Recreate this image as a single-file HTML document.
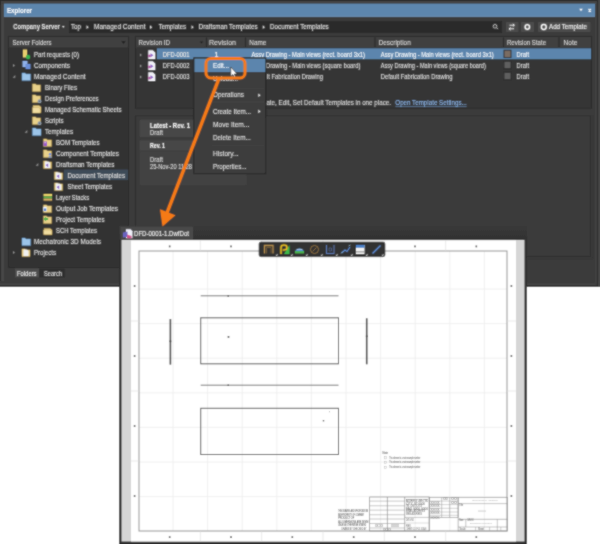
<!DOCTYPE html>
<html><head><meta charset="utf-8">
<style>
*{margin:0;padding:0}
html,body{width:600px;height:544px;overflow:hidden;background:#fff}
svg{display:block}
#w{will-change:transform}
text{font-family:"Liberation Sans",sans-serif}
</style></head><body><div id="w">
<svg width="600" height="544" viewBox="0 0 600 544">
<defs><filter id="bl" x="0" y="0" width="600" height="544" filterUnits="userSpaceOnUse"><feConvolveMatrix order="3" kernelMatrix="1 2 1 2 12 2 1 2 1" edgeMode="duplicate" preserveAlpha="true"/></filter></defs>
<g filter="url(#bl)">
<rect x="0" y="0" width="600" height="544" fill="#ffffff"/>
<rect x="0" y="0" width="600" height="287" fill="#3e3e3e"/>
<rect x="0.5" y="0.5" width="598" height="285.5" fill="none" stroke="#2c2c2c" stroke-width="1"/>
<rect x="1.2" y="1" width="2.8" height="284" fill="#464646"/>
<rect x="1" y="1" width="597" height="3" fill="#424242"/>
<rect x="4" y="3.6" width="591.5" height="13.2" fill="#5d86ad"/>
<line x1="4" y1="16.4" x2="595.5" y2="16.4" stroke="#7291b5" stroke-width="0.7"/>
<text x="7" y="12.55" font-size="7.5" fill="#f4f8fc" stroke="#f4f8fc" stroke-width="0.18" font-weight="bold" textLength="25" lengthAdjust="spacingAndGlyphs">Explorer</text>
<path d="M579.2 8.7 L582.8 8.7 L581 11.2 Z" fill="#f2f6fa"/>
<path d="M588.5 9 L591 11.5 M591 9 L588.5 11.5" stroke="#eef4fa" stroke-width="1.1"/>
<rect x="4" y="17" width="592" height="264" fill="#3a3a3a"/>
<rect x="0" y="281" width="600" height="6" fill="#3b3b3b"/>
<rect x="0" y="283.6" width="600" height="1.3" fill="#484848"/>
<rect x="0" y="285" width="600" height="1.8" fill="#363636"/>
<rect x="595" y="4" width="2.5" height="281" fill="#3f3f3f"/>
<line x1="597.6" y1="0" x2="597.6" y2="287" stroke="#2b2b2b" stroke-width="1"/>
<rect x="598.1" y="0" width="1.9" height="287" fill="#464646"/>
<text x="13.2" y="29.30" font-size="7" fill="#dcdcdc" stroke="#dcdcdc" stroke-width="0.18" font-weight="bold" textLength="46.6" lengthAdjust="spacingAndGlyphs">Company Server</text>
<path d="M62 26 L64.6 26 L63.3 28 Z" fill="#cfcfcf"/>
<rect x="69" y="21" width="433" height="12" fill="#2c2c2c"/>
<text x="71" y="29.30" font-size="7" fill="#d8d8d8" stroke="#d8d8d8" stroke-width="0.18" textLength="10" lengthAdjust="spacingAndGlyphs">Top</text>
<text x="94" y="29.30" font-size="7" fill="#d8d8d8" stroke="#d8d8d8" stroke-width="0.18" textLength="51.5" lengthAdjust="spacingAndGlyphs">Managed Content</text>
<text x="158.75" y="29.30" font-size="7" fill="#d8d8d8" stroke="#d8d8d8" stroke-width="0.18" textLength="27.25" lengthAdjust="spacingAndGlyphs">Templates</text>
<text x="198.75" y="29.30" font-size="7" fill="#d8d8d8" stroke="#d8d8d8" stroke-width="0.18" textLength="58.75" lengthAdjust="spacingAndGlyphs">Draftsman Templates</text>
<text x="270" y="29.30" font-size="7" fill="#d8d8d8" stroke="#d8d8d8" stroke-width="0.18" textLength="58.75" lengthAdjust="spacingAndGlyphs">Document Templates</text>
<path d="M86.5 25.3 L88.7 27.2 L86.5 29.1 Z" fill="#cfcfcf"/>
<path d="M150 25.3 L152.2 27.2 L150 29.1 Z" fill="#cfcfcf"/>
<path d="M191.5 25.3 L193.7 27.2 L191.5 29.1 Z" fill="#cfcfcf"/>
<path d="M262.75 25.3 L264.95 27.2 L262.75 29.1 Z" fill="#cfcfcf"/>
<circle cx="495" cy="26.3" r="1.8" fill="none" stroke="#bbb" stroke-width="0.9"/><path d="M496.3 27.6 L497.8 29.1" stroke="#bbb" stroke-width="1"/>
<rect x="506" y="22" width="12.5" height="10" fill="#4b4b4b" rx="1"/>
<path d="M509.5 25.2 L514 25.2 M512.8 23.9 L514.5 25.2 L512.8 26.5 M514 28.8 L509.5 28.8 M510.7 27.5 L509 28.8 L510.7 30.1" stroke="#e8e8e8" stroke-width="1" fill="none"/>
<rect x="521" y="22" width="13" height="10" fill="#4b4b4b" rx="1"/>
<circle cx="527.3" cy="27" r="2.2" fill="none" stroke="#f2f2f2" stroke-width="1.5"/>
<rect x="538" y="22" width="52.5" height="10" fill="#4b4b4b" rx="1"/>
<circle cx="543.8" cy="27" r="2.4" fill="none" stroke="#f2f2f2" stroke-width="1.5"/>
<text x="549" y="29.30" font-size="7" fill="#e8e8e8" stroke="#e8e8e8" stroke-width="0.18" textLength="38" lengthAdjust="spacingAndGlyphs">Add Template</text>
<rect x="8" y="36" width="121" height="232" fill="#333333"/>
<rect x="8.5" y="36.5" width="120" height="231" fill="none" stroke="#2b2b2b" stroke-width="1"/>
<rect x="9" y="37" width="119" height="10.5" fill="#3f3f3f"/>
<text x="12.5" y="44.90" font-size="7" fill="#cfcfcf" stroke="#cfcfcf" stroke-width="0.18" textLength="39" lengthAdjust="spacingAndGlyphs">Server Folders</text>
<path d="M121.5 41.3 L125.5 41.3 L123.5 43.8 Z" fill="#1a1a1a"/>
<rect x="64" y="169.5" width="64" height="10.5" fill="#3e4b58"/>
<text x="34" y="56.50" font-size="7" fill="#d6d6d6" stroke="#d6d6d6" stroke-width="0.18" textLength="45" lengthAdjust="spacingAndGlyphs">Part requests (0)</text>
<text x="34" y="67.50" font-size="7" fill="#d6d6d6" stroke="#d6d6d6" stroke-width="0.18" textLength="36" lengthAdjust="spacingAndGlyphs">Components</text>
<text x="34" y="78.50" font-size="7" fill="#d6d6d6" stroke="#d6d6d6" stroke-width="0.18" textLength="51.6" lengthAdjust="spacingAndGlyphs">Managed Content</text>
<text x="45" y="89.50" font-size="7" fill="#d6d6d6" stroke="#d6d6d6" stroke-width="0.18" textLength="32" lengthAdjust="spacingAndGlyphs">Binary Files</text>
<text x="45" y="100.50" font-size="7" fill="#d6d6d6" stroke="#d6d6d6" stroke-width="0.18" textLength="53.6" lengthAdjust="spacingAndGlyphs">Design Preferences</text>
<text x="45" y="111.50" font-size="7" fill="#d6d6d6" stroke="#d6d6d6" stroke-width="0.18" textLength="76.6" lengthAdjust="spacingAndGlyphs">Managed Schematic Sheets</text>
<text x="45" y="122.50" font-size="7" fill="#d6d6d6" stroke="#d6d6d6" stroke-width="0.18" textLength="18.6" lengthAdjust="spacingAndGlyphs">Scripts</text>
<text x="45" y="133.50" font-size="7" fill="#d6d6d6" stroke="#d6d6d6" stroke-width="0.18" textLength="28" lengthAdjust="spacingAndGlyphs">Templates</text>
<text x="56" y="144.50" font-size="7" fill="#d6d6d6" stroke="#d6d6d6" stroke-width="0.18" textLength="43.6" lengthAdjust="spacingAndGlyphs">BOM Templates</text>
<text x="56" y="155.50" font-size="7" fill="#d6d6d6" stroke="#d6d6d6" stroke-width="0.18" textLength="63" lengthAdjust="spacingAndGlyphs">Component Templates</text>
<text x="56" y="166.50" font-size="7" fill="#d6d6d6" stroke="#d6d6d6" stroke-width="0.18" textLength="58.4" lengthAdjust="spacingAndGlyphs">Draftsman Templates</text>
<text x="67.4" y="177.50" font-size="7" fill="#d6d6d6" stroke="#d6d6d6" stroke-width="0.18" textLength="57.6" lengthAdjust="spacingAndGlyphs">Document Templates</text>
<text x="67.4" y="188.50" font-size="7" fill="#d6d6d6" stroke="#d6d6d6" stroke-width="0.18" textLength="44.6" lengthAdjust="spacingAndGlyphs">Sheet Templates</text>
<text x="56" y="199.50" font-size="7" fill="#d6d6d6" stroke="#d6d6d6" stroke-width="0.18" textLength="33" lengthAdjust="spacingAndGlyphs">Layer Stacks</text>
<text x="56" y="210.50" font-size="7" fill="#d6d6d6" stroke="#d6d6d6" stroke-width="0.18" textLength="62" lengthAdjust="spacingAndGlyphs">Output Job Templates</text>
<text x="56" y="221.50" font-size="7" fill="#d6d6d6" stroke="#d6d6d6" stroke-width="0.18" textLength="48.6" lengthAdjust="spacingAndGlyphs">Project Templates</text>
<text x="56" y="232.50" font-size="7" fill="#d6d6d6" stroke="#d6d6d6" stroke-width="0.18" textLength="41" lengthAdjust="spacingAndGlyphs">SCH Templates</text>
<text x="34" y="243.50" font-size="7" fill="#d6d6d6" stroke="#d6d6d6" stroke-width="0.18" textLength="67" lengthAdjust="spacingAndGlyphs">Mechatronic 3D Models</text>
<text x="34" y="254.50" font-size="7" fill="#d6d6d6" stroke="#d6d6d6" stroke-width="0.18" textLength="22" lengthAdjust="spacingAndGlyphs">Projects</text>
<path d="M13 63.900000000000006 L15 65.4 L13 66.9 Z" fill="#8a8a8a"/>
<path d="M13 250.9 L15 252.4 L13 253.9 Z" fill="#8a8a8a"/>
<path d="M15.3 75.10000000000001 L15.3 77.7 L12.7 77.7 Z" fill="#8a8a8a"/>
<path d="M27.3 130.1 L27.3 132.70000000000002 L24.7 132.70000000000002 Z" fill="#8a8a8a"/>
<path d="M38.3 163.1 L38.3 165.70000000000002 L35.7 165.70000000000002 Z" fill="#8a8a8a"/>
<path d="M23 49.5 h4 v8 h-4 z" fill="#e8cf70"/><circle cx="28" cy="57" r="2.2" fill="#37b24d"/>
<path d="M22.5 61 h5 v6 h-5 z" fill="#8fb0e8"/><path d="M25.5 64 h5 v5 h-5 z" fill="#6a8ed8"/>
<path d="M22 73.1 h3 l1 1 h4.5 v6.5 h-8.5 z" fill="#9cc4e8" stroke="#5d8fbf" stroke-width="0.5"/>
<path d="M32.5 83.9 h3 l1 1 h4 v6.5 h-8 z" fill="#e8d08a" stroke="#b89a50" stroke-width="0.5"/>
<path d="M32.5 94.9 h3 l1 1 h4 v6.5 h-8 z" fill="#e8d08a" stroke="#b89a50" stroke-width="0.5"/>
<circle cx="39.5" cy="101.2" r="1.9" fill="#8d9aa8"/><circle cx="39.5" cy="101.2" r="0.7" fill="#5a6470"/>
<path d="M33 105.5 h6 l2 1.5 v5.5 h-7.5 z" fill="#e8d08a" stroke="#b89a50" stroke-width="0.5"/><path d="M32.5 107.5 h6 l1.8 1.3 v4.2 h-7.8 z" fill="#f0dca0" stroke="#b89a50" stroke-width="0.4"/>
<path d="M32.5 116.9 h3 l1 1 h4 v6.5 h-8 z" fill="#e8d08a" stroke="#b89a50" stroke-width="0.5"/>
<circle cx="39.5" cy="123.2" r="1.9" fill="#8d9aa8"/><circle cx="39.5" cy="123.2" r="0.7" fill="#5a6470"/>
<path d="M32.5 128.1 h3 l1 1 h4.5 v6.5 h-8.5 z" fill="#9cc4e8" stroke="#5d8fbf" stroke-width="0.5"/>
<path d="M43.5 138.9 h3 l1 1 h4 v6.5 h-8 z" fill="#e8d08a" stroke="#b89a50" stroke-width="0.5"/>
<rect x="43.5" y="141.5" width="3.5" height="4.5" fill="#9b59c6"/><rect x="44.3" y="142.5" width="1.8" height="0.6" fill="#fff"/>
<path d="M43.5 149.9 h3 l1 1 h4 v6.5 h-8 z" fill="#e8d08a" stroke="#b89a50" stroke-width="0.5"/>
<circle cx="50" cy="154.3" r="1.2" fill="#6f8fd8"/><path d="M47.8 157.5 q2.2 -3 4.4 0 z" fill="#6f8fd8"/>
<path d="M43.5 160.9 h3 l1 1 h4 v6.5 h-8 z" fill="#e8d08a" stroke="#b89a50" stroke-width="0.5"/>
<path d="M45 161.5 h3.5 l1.5 1.5 v5 h-5 z" fill="#f0f0f6"/><path d="M45.6 165.0 l2.6 -1.6 v3.8 z" fill="#8a5cc8"/>
<path d="M54.5 171.9 h3 l1 1 h4 v6.5 h-8 z" fill="#e8dca8" stroke="#b89a50" stroke-width="0.5"/>
<path d="M56 172.5 h3.5 l1.5 1.5 v5 h-5 z" fill="#f0f0f6"/><path d="M56.6 176.0 l2.6 -1.6 v3.8 z" fill="#8a5cc8"/>
<path d="M54.5 182.9 h3 l1 1 h4 v6.5 h-8 z" fill="#e8dca8" stroke="#b89a50" stroke-width="0.5"/>
<path d="M56 183.5 h3.5 l1.5 1.5 v5 h-5 z" fill="#f0f0f6"/><path d="M56.6 187.0 l2.6 -1.6 v3.8 z" fill="#8a5cc8"/>
<rect x="43.5" y="194" width="8.5" height="2.2" fill="#e6cf6a"/><rect x="43.5" y="196.3" width="8.5" height="2.2" fill="#62b04a"/><rect x="43.5" y="198.6" width="8.5" height="2" fill="#d8b060"/>
<path d="M43.5 204.9 h3 l1 1 h4 v6.5 h-8 z" fill="#e8d08a" stroke="#b89a50" stroke-width="0.5"/>
<rect x="43.3" y="206.8" width="3.4" height="4.6" fill="#f2f6ff"/><rect x="43.8" y="208.5" width="2.4" height="2.5" fill="#4a7fd0"/>
<path d="M43.5 215.9 h3 l1 1 h4 v6.5 h-8 z" fill="#e8d08a" stroke="#b89a50" stroke-width="0.5"/>
<path d="M43.5 219 l2.6 -2.4 v1.4 h2 v2 h-2 v1.4 z" fill="#4cb04c"/>
<path d="M44 228.5 h6 l2 1.5 v4.5 h-7.5 z" fill="#e8d08a" stroke="#b89a50" stroke-width="0.5"/><path d="M43.5 230 h6.5 l1.8 1.3 v3.2 h-8.3 z" fill="#f0dca0" stroke="#b89a50" stroke-width="0.4"/>
<path d="M22 238.1 h3 l1 1 h4.5 v6.5 h-8.5 z" fill="#9cc4e8" stroke="#5d8fbf" stroke-width="0.5"/>
<path d="M22 248.9 h3 l1 1 h4 v6.5 h-8 z" fill="#e8d08a" stroke="#b89a50" stroke-width="0.5"/>
<path d="M23.5 249.5 h3.5 l1.5 1.5 v5 h-5 z" fill="#f0f0f0"/>
<rect x="15" y="268.5" width="24" height="9" fill="#4d4d4d"/>
<text x="17" y="275.60" font-size="7" fill="#e2e2e2" stroke="#e2e2e2" stroke-width="0.18" textLength="19.5" lengthAdjust="spacingAndGlyphs">Folders</text>
<rect x="39" y="268.5" width="26" height="9" fill="#2e2e2e"/>
<text x="44" y="275.60" font-size="7" fill="#d6d6d6" stroke="#d6d6d6" stroke-width="0.18" textLength="18" lengthAdjust="spacingAndGlyphs">Search</text>
<rect x="135.5" y="36.5" width="456" height="71.8" fill="#343434"/>
<rect x="135.5" y="36.5" width="456" height="71.8" fill="none" stroke="#2b2b2b" stroke-width="1"/>
<rect x="136" y="37" width="455" height="10.5" fill="#3f3f3f"/>
<text x="138.5" y="45.20" font-size="7" fill="#cdcdcd" stroke="#cdcdcd" stroke-width="0.18" textLength="31.5" lengthAdjust="spacingAndGlyphs">Revision ID</text>
<text x="209" y="45.20" font-size="7" fill="#cdcdcd" stroke="#cdcdcd" stroke-width="0.18" textLength="27" lengthAdjust="spacingAndGlyphs">Revision</text>
<text x="249.3" y="45.20" font-size="7" fill="#cdcdcd" stroke="#cdcdcd" stroke-width="0.18" textLength="17" lengthAdjust="spacingAndGlyphs">Name</text>
<text x="378.7" y="45.20" font-size="7" fill="#cdcdcd" stroke="#cdcdcd" stroke-width="0.18" textLength="32" lengthAdjust="spacingAndGlyphs">Description</text>
<text x="507" y="45.20" font-size="7" fill="#cdcdcd" stroke="#cdcdcd" stroke-width="0.18" textLength="39" lengthAdjust="spacingAndGlyphs">Revision State</text>
<text x="563.6" y="45.20" font-size="7" fill="#cdcdcd" stroke="#cdcdcd" stroke-width="0.18" textLength="13.8" lengthAdjust="spacingAndGlyphs">Note</text>
<line x1="206.5" y1="37.5" x2="206.5" y2="47" stroke="#2a2a2a" stroke-width="1.2"/>
<line x1="245.5" y1="37.5" x2="245.5" y2="47" stroke="#2a2a2a" stroke-width="1.2"/>
<line x1="375" y1="37.5" x2="375" y2="47" stroke="#2a2a2a" stroke-width="1.2"/>
<line x1="503.5" y1="37.5" x2="503.5" y2="47" stroke="#2a2a2a" stroke-width="1.2"/>
<line x1="559" y1="37.5" x2="559" y2="47" stroke="#2a2a2a" stroke-width="1.2"/>
<path d="M199.8 41.6 L203.2 41.6 L201.5 43.6 Z" fill="#1e1e1e"/>
<rect x="157" y="48.3" width="434" height="10.9" fill="#5b85ad"/>
<path d="M140 53.4 L142 54.9 L140 56.4 Z" fill="#8a8a8a"/>
<path d="M148.3 50.199999999999996 h4.5 l2.5 2.5 v6.2 h-7 z" fill="#f2f2f8"/><path d="M150.5 53.199999999999996 l3 2 l-3 2 z" fill="#8a5cc8"/><rect x="148.3" y="54.699999999999996" width="2.3" height="2.5" fill="#b04fa0"/>
<text x="162.8" y="57.00" font-size="7" fill="#e6e6e6" stroke="#e6e6e6" stroke-width="0.18" textLength="26.7" lengthAdjust="spacingAndGlyphs">DFD-0001</text>
<path d="M140 64.4 L142 65.9 L140 67.4 Z" fill="#8a8a8a"/>
<path d="M148.3 61.2 h4.5 l2.5 2.5 v6.2 h-7 z" fill="#f2f2f8"/><path d="M150.5 64.2 l3 2 l-3 2 z" fill="#8a5cc8"/><rect x="148.3" y="65.7" width="2.3" height="2.5" fill="#b04fa0"/>
<text x="162.8" y="68.00" font-size="7" fill="#d2d2d2" stroke="#d2d2d2" stroke-width="0.18" textLength="26.7" lengthAdjust="spacingAndGlyphs">DFD-0002</text>
<path d="M140 75.5 L142 77.0 L140 78.5 Z" fill="#8a8a8a"/>
<path d="M148.3 72.3 h4.5 l2.5 2.5 v6.2 h-7 z" fill="#f2f2f8"/><path d="M150.5 75.3 l3 2 l-3 2 z" fill="#8a5cc8"/><rect x="148.3" y="76.8" width="2.3" height="2.5" fill="#b04fa0"/>
<text x="162.8" y="79.10" font-size="7" fill="#d2d2d2" stroke="#d2d2d2" stroke-width="0.18" textLength="26.7" lengthAdjust="spacingAndGlyphs">DFD-0003</text>
<text x="214.5" y="57.00" font-size="7" fill="#eef2f6" stroke="#eef2f6" stroke-width="0.18">1</text>
<text x="251.5" y="57.00" font-size="7" fill="#f0f4f8" stroke="#f0f4f8" stroke-width="0.18" textLength="113.5" lengthAdjust="spacingAndGlyphs">Assy Drawing - Main views (rect. board 3x1)</text>
<text x="380.8" y="57.00" font-size="7" fill="#f0f4f8" stroke="#f0f4f8" stroke-width="0.18" textLength="113" lengthAdjust="spacingAndGlyphs">Assy Drawing - Main views (rect. board 3x1)</text>
<text x="266" y="68.00" font-size="7" fill="#d4d4d4" stroke="#d4d4d4" stroke-width="0.18" textLength="94.4" lengthAdjust="spacingAndGlyphs">Drawing - Main views (square board)</text>
<text x="380.8" y="68.00" font-size="7" fill="#d4d4d4" stroke="#d4d4d4" stroke-width="0.18" textLength="105" lengthAdjust="spacingAndGlyphs">Assy Drawing - Main views (square board)</text>
<text x="267" y="79.10" font-size="7" fill="#d4d4d4" stroke="#d4d4d4" stroke-width="0.18" textLength="56" lengthAdjust="spacingAndGlyphs">lt Fabrication Drawing</text>
<text x="380.8" y="79.10" font-size="7" fill="#d4d4d4" stroke="#d4d4d4" stroke-width="0.18" textLength="71.7" lengthAdjust="spacingAndGlyphs">Default Fabrication Drawing</text>
<rect x="504" y="50.199999999999996" width="7" height="7.4" fill="#7a6c62" stroke="#2c2c2c" stroke-width="0.9"/>
<text x="516.6" y="57.00" font-size="7" fill="#f0f4f8" stroke="#f0f4f8" stroke-width="0.18" textLength="12.4" lengthAdjust="spacingAndGlyphs">Draft</text>
<rect x="504" y="61.2" width="7" height="7.4" fill="#5e5e5e" stroke="#2c2c2c" stroke-width="0.9"/>
<text x="516.6" y="68.00" font-size="7" fill="#d4d4d4" stroke="#d4d4d4" stroke-width="0.18" textLength="12.4" lengthAdjust="spacingAndGlyphs">Draft</text>
<rect x="504" y="72.3" width="7" height="7.4" fill="#5e5e5e" stroke="#2c2c2c" stroke-width="0.9"/>
<text x="516.6" y="79.10" font-size="7" fill="#d4d4d4" stroke="#d4d4d4" stroke-width="0.18" textLength="12.4" lengthAdjust="spacingAndGlyphs">Draft</text>
<text x="266.4" y="105.30" font-size="7" fill="#d0d0d0" stroke="#d0d0d0" stroke-width="0.18" textLength="124.6" lengthAdjust="spacingAndGlyphs">ate, Edit, Set Default Templates in one place.</text>
<text x="395.3" y="105.30" font-size="7" fill="#86aee0" stroke="#86aee0" stroke-width="0.18" textLength="71.4" lengthAdjust="spacingAndGlyphs">Open Template Settings...</text>
<line x1="395.3" y1="106.6" x2="466.7" y2="106.6" stroke="#6f98c8" stroke-width="0.6"/>
<rect x="135.5" y="115.7" width="455" height="140.8" fill="#3b3b3b"/>
<rect x="135.5" y="115.7" width="455" height="140.8" fill="none" stroke="#2e2e2e" stroke-width="1"/>
<line x1="135" y1="258.9" x2="592.6" y2="258.9" stroke="#363636" stroke-width="0.8"/>
<line x1="592.6" y1="115" x2="592.6" y2="259" stroke="#363636" stroke-width="0.8"/>
<rect x="139.7" y="119.7" width="107" height="17.3" fill="#474747"/>
<text x="150" y="127.70" font-size="7" fill="#eeeeee" stroke="#eeeeee" stroke-width="0.18" font-weight="bold" textLength="40" lengthAdjust="spacingAndGlyphs">Latest - Rev. 1</text>
<text x="150" y="135.10" font-size="7" fill="#cfcfcf" stroke="#cfcfcf" stroke-width="0.18" textLength="13" lengthAdjust="spacingAndGlyphs">Draft</text>
<rect x="139.7" y="140.5" width="107" height="44.5" fill="#434343"/>
<rect x="139.7" y="140.5" width="107" height="10.5" fill="#474747"/>
<line x1="139.7" y1="151.2" x2="246.7" y2="151.2" stroke="#393939" stroke-width="0.9"/>
<text x="150" y="148.40" font-size="7" fill="#eeeeee" stroke="#eeeeee" stroke-width="0.18" font-weight="bold" textLength="15" lengthAdjust="spacingAndGlyphs">Rev. 1</text>
<text x="150" y="162.10" font-size="7" fill="#cfcfcf" stroke="#cfcfcf" stroke-width="0.18" textLength="13" lengthAdjust="spacingAndGlyphs">Draft</text>
<text x="150" y="169.10" font-size="7" fill="#cfcfcf" stroke="#cfcfcf" stroke-width="0.18" textLength="42" lengthAdjust="spacingAndGlyphs">25-Nov-20 11:28</text>
<rect x="193.8" y="57.8" width="72" height="116" fill="#3c3c3c"/>
<rect x="193.8" y="57.8" width="72" height="116" fill="none" stroke="#252525" stroke-width="1"/>
<rect x="194.5" y="58.6" width="70.8" height="13.4" fill="#5b85ad"/>
<text x="213" y="67.90" font-size="7" fill="#f4f8fc" stroke="#f4f8fc" stroke-width="0.18" textLength="16" lengthAdjust="spacingAndGlyphs">Edit...</text>
<text x="213" y="80.60" font-size="7" fill="#d6d6d6" stroke="#d6d6d6" stroke-width="0.18" textLength="25" lengthAdjust="spacingAndGlyphs">Upload...</text>
<text x="213" y="97.30" font-size="7" fill="#d6d6d6" stroke="#d6d6d6" stroke-width="0.18" textLength="31" lengthAdjust="spacingAndGlyphs">Operations</text>
<text x="213" y="113.50" font-size="7" fill="#d6d6d6" stroke="#d6d6d6" stroke-width="0.18" textLength="38" lengthAdjust="spacingAndGlyphs">Create Item...</text>
<text x="213" y="126.70" font-size="7" fill="#d6d6d6" stroke="#d6d6d6" stroke-width="0.18" textLength="36.3" lengthAdjust="spacingAndGlyphs">Move Item...</text>
<text x="213" y="139.60" font-size="7" fill="#d6d6d6" stroke="#d6d6d6" stroke-width="0.18" textLength="37.8" lengthAdjust="spacingAndGlyphs">Delete Item...</text>
<text x="213" y="156.10" font-size="7" fill="#d6d6d6" stroke="#d6d6d6" stroke-width="0.18" textLength="25.6" lengthAdjust="spacingAndGlyphs">History...</text>
<text x="213" y="168.60" font-size="7" fill="#d6d6d6" stroke="#d6d6d6" stroke-width="0.18" textLength="33.5" lengthAdjust="spacingAndGlyphs">Properties...</text>
<line x1="212.5" y1="88.3" x2="264" y2="88.3" stroke="#474747" stroke-width="0.8"/>
<line x1="212.5" y1="102" x2="264" y2="102" stroke="#474747" stroke-width="0.8"/>
<line x1="212.5" y1="145.3" x2="264" y2="145.3" stroke="#474747" stroke-width="0.8"/>
<path d="M258.3 93.4 L260.6 95.2 L258.3 97.0 Z" fill="#e0e0e0"/>
<path d="M258.3 109.60000000000001 L260.6 111.4 L258.3 113.2 Z" fill="#e0e0e0"/>
<path d="M230.8 67 L230.8 76.5 L232.9 74.5 L234.3 77.7 L235.6 77.1 L234.3 74 L237.1 74 Z" fill="#fff" stroke="#222" stroke-width="0.6"/>
<rect x="119" y="226" width="408" height="318" fill="#2e2e2e"/>
<defs><linearGradient id="db" x1="0" y1="0" x2="0" y2="1"><stop offset="0" stop-color="#393939"/><stop offset="1" stop-color="#313131"/></linearGradient></defs>
<rect x="119" y="226" width="408" height="14" fill="url(#db)"/>
<rect x="120.5" y="226.8" width="72.5" height="13" fill="#4a4a4a"/>
<path d="M126 229.3 h4.5 l2 2 v7 h-6.5 z" fill="#f0f0fa"/><path d="M123 232.5 l4.5 -1 v5.5 l-4.5 0.5 z" fill="#6a64c0"/><path d="M127 234.5 l4.5 1.5 v2.3 h-4.5 z" fill="#d0508a"/>
<text x="134" y="235.90" font-size="7" fill="#e4e4e4" stroke="#e4e4e4" stroke-width="0.18" textLength="55" lengthAdjust="spacingAndGlyphs">DFD-0001-1.DwfDot</text>
<rect x="121.5" y="240" width="403" height="301.5" fill="#d6d6d6"/>
<rect x="131" y="240.5" width="385" height="301" fill="#ffffff"/>
<line x1="173.0" y1="251" x2="173.0" y2="531" stroke="#ececec" stroke-width="0.8"/>
<line x1="207.6" y1="251" x2="207.6" y2="531" stroke="#ececec" stroke-width="0.8"/>
<line x1="242.2" y1="251" x2="242.2" y2="531" stroke="#ececec" stroke-width="0.8"/>
<line x1="276.8" y1="251" x2="276.8" y2="531" stroke="#ececec" stroke-width="0.8"/>
<line x1="311.4" y1="251" x2="311.4" y2="531" stroke="#ececec" stroke-width="0.8"/>
<line x1="346.0" y1="251" x2="346.0" y2="531" stroke="#ececec" stroke-width="0.8"/>
<line x1="380.6" y1="251" x2="380.6" y2="531" stroke="#ececec" stroke-width="0.8"/>
<line x1="415.2" y1="251" x2="415.2" y2="531" stroke="#ececec" stroke-width="0.8"/>
<line x1="449.8" y1="251" x2="449.8" y2="531" stroke="#ececec" stroke-width="0.8"/>
<line x1="484.4" y1="251" x2="484.4" y2="531" stroke="#ececec" stroke-width="0.8"/>
<line x1="139" y1="289.0" x2="507" y2="289.0" stroke="#ececec" stroke-width="0.8"/>
<line x1="139" y1="323.6" x2="507" y2="323.6" stroke="#ececec" stroke-width="0.8"/>
<line x1="139" y1="358.2" x2="507" y2="358.2" stroke="#ececec" stroke-width="0.8"/>
<line x1="139" y1="392.8" x2="507" y2="392.8" stroke="#ececec" stroke-width="0.8"/>
<line x1="139" y1="427.4" x2="507" y2="427.4" stroke="#ececec" stroke-width="0.8"/>
<line x1="139" y1="462.0" x2="507" y2="462.0" stroke="#ececec" stroke-width="0.8"/>
<line x1="139" y1="496.6" x2="507" y2="496.6" stroke="#ececec" stroke-width="0.8"/>
<rect x="139" y="251" width="368" height="280" fill="none" stroke="#959595" stroke-width="1"/>
<line x1="200.33333333333334" y1="240.5" x2="200.33333333333334" y2="251" stroke="#dcdcdc" stroke-width="0.6"/>
<line x1="200.33333333333334" y1="531" x2="200.33333333333334" y2="541.5" stroke="#dcdcdc" stroke-width="0.6"/>
<line x1="261.6666666666667" y1="240.5" x2="261.6666666666667" y2="251" stroke="#dcdcdc" stroke-width="0.6"/>
<line x1="261.6666666666667" y1="531" x2="261.6666666666667" y2="541.5" stroke="#dcdcdc" stroke-width="0.6"/>
<line x1="323.0" y1="240.5" x2="323.0" y2="251" stroke="#dcdcdc" stroke-width="0.6"/>
<line x1="323.0" y1="531" x2="323.0" y2="541.5" stroke="#dcdcdc" stroke-width="0.6"/>
<line x1="384.33333333333337" y1="240.5" x2="384.33333333333337" y2="251" stroke="#dcdcdc" stroke-width="0.6"/>
<line x1="384.33333333333337" y1="531" x2="384.33333333333337" y2="541.5" stroke="#dcdcdc" stroke-width="0.6"/>
<line x1="445.6666666666667" y1="240.5" x2="445.6666666666667" y2="251" stroke="#dcdcdc" stroke-width="0.6"/>
<line x1="445.6666666666667" y1="531" x2="445.6666666666667" y2="541.5" stroke="#dcdcdc" stroke-width="0.6"/>
<line x1="131" y1="321" x2="139" y2="321" stroke="#dcdcdc" stroke-width="0.6"/>
<line x1="507" y1="321" x2="516" y2="321" stroke="#dcdcdc" stroke-width="0.6"/>
<line x1="131" y1="391" x2="139" y2="391" stroke="#dcdcdc" stroke-width="0.6"/>
<line x1="507" y1="391" x2="516" y2="391" stroke="#dcdcdc" stroke-width="0.6"/>
<line x1="131" y1="461" x2="139" y2="461" stroke="#dcdcdc" stroke-width="0.6"/>
<line x1="507" y1="461" x2="516" y2="461" stroke="#dcdcdc" stroke-width="0.6"/>
<rect x="168.86666666666665" y="245.5" width="1.6" height="1.8" fill="#555"/>
<rect x="168.86666666666665" y="536.2" width="1.6" height="1.8" fill="#555"/>
<rect x="230.2" y="245.5" width="1.6" height="1.8" fill="#555"/>
<rect x="230.2" y="536.2" width="1.6" height="1.8" fill="#555"/>
<rect x="291.53333333333336" y="245.5" width="1.6" height="1.8" fill="#555"/>
<rect x="291.53333333333336" y="536.2" width="1.6" height="1.8" fill="#555"/>
<rect x="352.8666666666667" y="245.5" width="1.6" height="1.8" fill="#555"/>
<rect x="352.8666666666667" y="536.2" width="1.6" height="1.8" fill="#555"/>
<rect x="414.2" y="245.5" width="1.6" height="1.8" fill="#555"/>
<rect x="414.2" y="536.2" width="1.6" height="1.8" fill="#555"/>
<rect x="475.53333333333336" y="245.5" width="1.6" height="1.8" fill="#555"/>
<rect x="475.53333333333336" y="536.2" width="1.6" height="1.8" fill="#555"/>
<rect x="133.8" y="285.1" width="1.6" height="1.8" fill="#555"/>
<rect x="510.6" y="285.1" width="1.6" height="1.8" fill="#555"/>
<rect x="133.8" y="355.1" width="1.6" height="1.8" fill="#555"/>
<rect x="510.6" y="355.1" width="1.6" height="1.8" fill="#555"/>
<rect x="133.8" y="425.1" width="1.6" height="1.8" fill="#555"/>
<rect x="510.6" y="425.1" width="1.6" height="1.8" fill="#555"/>
<rect x="133.8" y="495.1" width="1.6" height="1.8" fill="#555"/>
<rect x="510.6" y="495.1" width="1.6" height="1.8" fill="#555"/>
<line x1="200.7" y1="295.8" x2="338.5" y2="295.8" stroke="#666" stroke-width="0.9"/>
<rect x="227.5" y="295.2" width="1.5" height="1.5" fill="#444"/>
<rect x="200.7" y="317.8" width="137.8" height="46" fill="none" stroke="#555" stroke-width="1"/>
<rect x="227.7" y="336" width="1.6" height="1.8" fill="#444"/>
<line x1="170.4" y1="319" x2="170.4" y2="364.6" stroke="#3a3a3a" stroke-width="1.6"/>
<rect x="169.6" y="340.5" width="1.6" height="1.6" fill="#222"/>
<line x1="366.7" y1="318.3" x2="366.7" y2="364.3" stroke="#3a3a3a" stroke-width="1.6"/>
<rect x="365.9" y="335.5" width="1.6" height="1.6" fill="#222"/>
<line x1="200.7" y1="385.2" x2="338.5" y2="385.2" stroke="#666" stroke-width="0.9"/>
<rect x="227.5" y="384.5" width="1.5" height="1.5" fill="#444"/>
<rect x="200.7" y="408.3" width="137.8" height="46.2" fill="none" stroke="#555" stroke-width="1"/>
<rect x="322.8" y="420" width="1.4" height="1.4" fill="#555"/>
<rect x="329" y="411.3" width="0.9" height="0.9" fill="#999"/>
<rect x="259" y="242" width="126" height="14.7" fill="#323232" rx="2"/>
<rect x="259" y="242" width="126" height="14.7" fill="none" stroke="#262626" stroke-width="0.6" rx="2"/>
<path d="M264.5 253.5 V245.5 H273 V253.5" fill="none" stroke="#b08a4c" stroke-width="1.3"/><path d="M266.5 253.5 V247.5 H271 V253.5" fill="none" stroke="#8a6c3c" stroke-width="0.7"/>
<path d="M284 254 L289.5 254 L289.5 245 Z" fill="#3cb84a"/><path d="M281 254 V247.5 Q281 245 284 245 Q287 245 287 247.5 Q287 250 284 250 H282.5" fill="none" stroke="#e0b820" stroke-width="1.6"/>
<path d="M295 251 Q299.5 245.5 304 251 Z" fill="#4a8ad0"/><rect x="295" y="251" width="9" height="2.5" fill="#4cb050"/><path d="M296.5 249.5 h6" stroke="#ddd" stroke-width="0.6"/>
<circle cx="314.5" cy="249.5" r="4" fill="none" stroke="#8f6e3e" stroke-width="1"/><path d="M312.5 251.5 L316.5 247.5" stroke="#8f6e3e" stroke-width="0.8"/>
<path d="M326.5 245 V253.5 H334 V245" fill="none" stroke="#5a74aa" stroke-width="1.1"/><path d="M329 248 h2.5 v3 h-2.5 z" fill="none" stroke="#5a74aa" stroke-width="0.6"/>
<path d="M341.5 253 L345 250 L347 251.5 L350 247" fill="none" stroke="#5a88d0" stroke-width="1.2"/><path d="M341 253.5 l2 -2 M348.5 246 l2 -1" stroke="#8ab" stroke-width="0.8"/>
<rect x="356" y="245" width="8.5" height="9" fill="#f2f2f2"/><rect x="356" y="245" width="8.5" height="2.8" fill="#4a80c8"/><rect x="356" y="251.5" width="8.5" height="0.8" fill="#666"/>
<path d="M372.5 253.5 L380.5 245.5" stroke="#5a88d0" stroke-width="1.4"/>
<path d="M275.5 255.8 L277.5 253.8 L277.5 255.8 Z" fill="#ddd"/>
<path d="M290.5 255.8 L292.5 253.8 L292.5 255.8 Z" fill="#ddd"/>
<path d="M305.5 255.8 L307.5 253.8 L307.5 255.8 Z" fill="#ddd"/>
<path d="M320.5 255.8 L322.5 253.8 L322.5 255.8 Z" fill="#ddd"/>
<path d="M335.5 255.8 L337.5 253.8 L337.5 255.8 Z" fill="#ddd"/>
<path d="M350.5 255.8 L352.5 253.8 L352.5 255.8 Z" fill="#ddd"/>
<path d="M365.5 255.8 L367.5 253.8 L367.5 255.8 Z" fill="#ddd"/>
<path d="M381.5 255.8 L383.5 253.8 L383.5 255.8 Z" fill="#ddd"/>
<text x="382.5" y="453.64" font-size="2.8" fill="#333" textLength="5.5" lengthAdjust="spacingAndGlyphs">Note</text>
<rect x="384.2" y="456.7" width="2.4" height="2.2" fill="none" stroke="#aaa" stroke-width="0.4"/>
<text x="389.3" y="458.61" font-size="2.7" fill="#444" textLength="31" lengthAdjust="spacingAndGlyphs">This element is a note example number</text>
<rect x="384.2" y="461.4" width="2.4" height="2.2" fill="none" stroke="#aaa" stroke-width="0.4"/>
<text x="389.3" y="463.31" font-size="2.7" fill="#444" textLength="31" lengthAdjust="spacingAndGlyphs">This element is a note example number</text>
<rect x="384.2" y="466.4" width="2.4" height="2.2" fill="none" stroke="#aaa" stroke-width="0.4"/>
<text x="389.3" y="468.31" font-size="2.7" fill="#444" textLength="31" lengthAdjust="spacingAndGlyphs">This element is a note example number</text>
<rect x="369.7" y="497" width="59.5" height="34" fill="none" stroke="#7a7a7a" stroke-width="0.6"/>
<line x1="387.4" y1="497" x2="387.4" y2="531" stroke="#7a7a7a" stroke-width="0.6"/>
<line x1="404.7" y1="497" x2="404.7" y2="531" stroke="#7a7a7a" stroke-width="0.6"/>
<line x1="369.7" y1="501.1" x2="404.7" y2="501.1" stroke="#8f8f8f" stroke-width="0.5"/>
<line x1="369.7" y1="505.8" x2="404.7" y2="505.8" stroke="#8f8f8f" stroke-width="0.5"/>
<line x1="369.7" y1="510.1" x2="404.7" y2="510.1" stroke="#8f8f8f" stroke-width="0.5"/>
<line x1="369.7" y1="514.75" x2="404.7" y2="514.75" stroke="#8f8f8f" stroke-width="0.5"/>
<line x1="369.7" y1="519" x2="404.7" y2="519" stroke="#8f8f8f" stroke-width="0.5"/>
<line x1="369.7" y1="523.5" x2="404.7" y2="523.5" stroke="#8f8f8f" stroke-width="0.5"/>
<line x1="369.7" y1="528" x2="404.7" y2="528" stroke="#8f8f8f" stroke-width="0.5"/>
<line x1="429.2" y1="497" x2="429.2" y2="531" stroke="#8a8a8a" stroke-width="0.6"/>
<line x1="404.7" y1="517.4" x2="429.2" y2="517.4" stroke="#8a8a8a" stroke-width="0.5"/>
<line x1="404.7" y1="523" x2="429.2" y2="523" stroke="#aaa" stroke-width="0.4"/>
<text x="375" y="526.58" font-size="2.6" fill="#666" textLength="8" lengthAdjust="spacingAndGlyphs">XX XX</text>
<text x="391" y="526.58" font-size="2.6" fill="#666" textLength="8" lengthAdjust="spacingAndGlyphs">XXXX</text>
<text x="383" y="530.58" font-size="2.6" fill="#666" textLength="8" lengthAdjust="spacingAndGlyphs">XX XX</text>
<text x="406" y="499.59" font-size="2.3" fill="#555" textLength="22" lengthAdjust="spacingAndGlyphs">COMPANY NAME ADDR</text>
<text x="406" y="502.48" font-size="2.6" fill="#555" textLength="22" lengthAdjust="spacingAndGlyphs">ADDRESS LINE 1 BL</text>
<text x="406" y="504.98" font-size="2.6" fill="#555" textLength="19" lengthAdjust="spacingAndGlyphs">CITY, ST 0000</text>
<text x="406" y="507.48" font-size="2.6" fill="#555" textLength="16" lengthAdjust="spacingAndGlyphs">TEL XXXX  XX.XX</text>
<text x="406" y="509.98" font-size="2.6" fill="#555" textLength="22" lengthAdjust="spacingAndGlyphs">FAX 0000 0000</text>
<text x="406" y="512.48" font-size="2.6" fill="#555" textLength="19" lengthAdjust="spacingAndGlyphs">EMAIL ADDRESS</text>
<text x="406" y="514.98" font-size="2.6" fill="#555" textLength="16" lengthAdjust="spacingAndGlyphs">WEB ADDRESS</text>
<text x="406" y="520.58" font-size="2.6" fill="#666" textLength="8" lengthAdjust="spacingAndGlyphs">DWG NO</text>
<text x="406" y="526.58" font-size="2.6" fill="#666" textLength="5" lengthAdjust="spacingAndGlyphs">REV</text>
<text x="406.5" y="530.28" font-size="2.6" fill="#666" textLength="20" lengthAdjust="spacingAndGlyphs">SHEET 01 OF 01 SCALE</text>
<rect x="429.7" y="497.6" width="28.4" height="19.9" fill="none" stroke="#8a8a8a" stroke-width="0.6"/>
<line x1="441.7" y1="497.6" x2="441.7" y2="517.5" stroke="#8a8a8a" stroke-width="0.5"/>
<line x1="449.7" y1="497.6" x2="449.7" y2="517.5" stroke="#8a8a8a" stroke-width="0.5"/>
<line x1="429.7" y1="501.1" x2="458.1" y2="501.1" stroke="#999" stroke-width="0.45"/>
<line x1="429.7" y1="504.6" x2="458.1" y2="504.6" stroke="#999" stroke-width="0.45"/>
<line x1="429.7" y1="508.3" x2="458.1" y2="508.3" stroke="#999" stroke-width="0.45"/>
<line x1="429.7" y1="512" x2="458.1" y2="512" stroke="#999" stroke-width="0.45"/>
<line x1="429.7" y1="515.3" x2="458.1" y2="515.3" stroke="#999" stroke-width="0.45"/>
<text x="430.5" y="503.68" font-size="2.6" fill="#666" textLength="9" lengthAdjust="spacingAndGlyphs">XXXXX</text>
<text x="430.5" y="507.28" font-size="2.6" fill="#666" textLength="9" lengthAdjust="spacingAndGlyphs">XXXXX</text>
<text x="430.5" y="510.88" font-size="2.6" fill="#666" textLength="9" lengthAdjust="spacingAndGlyphs">XXXXX</text>
<text x="430.5" y="514.48" font-size="2.6" fill="#666" textLength="9" lengthAdjust="spacingAndGlyphs">XXXXX</text>
<text x="430.5" y="519.38" font-size="2.6" fill="#666" textLength="9" lengthAdjust="spacingAndGlyphs">XXXXXX</text>
<text x="443" y="500.18" font-size="2.6" fill="#666" textLength="5" lengthAdjust="spacingAndGlyphs">XXX</text>
<text x="451" y="500.18" font-size="2.6" fill="#666" textLength="6" lengthAdjust="spacingAndGlyphs">XXXX</text>
<text x="451" y="503.68" font-size="2.6" fill="#666" textLength="6" lengthAdjust="spacingAndGlyphs">XXXX</text>
<rect x="458.1" y="497.6" width="49.4" height="33.4" fill="none" stroke="#8a8a8a" stroke-width="0.6"/>
<line x1="458.1" y1="503.6" x2="507.5" y2="503.6" stroke="#8a8a8a" stroke-width="0.5"/>
<line x1="458.1" y1="519.3" x2="507.5" y2="519.3" stroke="#8a8a8a" stroke-width="0.6"/>
<line x1="458.1" y1="527" x2="507.5" y2="527" stroke="#8a8a8a" stroke-width="0.5"/>
<line x1="465.8" y1="519.3" x2="465.8" y2="527" stroke="#8a8a8a" stroke-width="0.5"/>
<line x1="497.3" y1="519.3" x2="497.3" y2="531" stroke="#8a8a8a" stroke-width="0.5"/>
<line x1="475.6" y1="527" x2="475.6" y2="531" stroke="#999" stroke-width="0.45"/>
<line x1="489.6" y1="527" x2="489.6" y2="531" stroke="#999" stroke-width="0.45"/>
<line x1="500.8" y1="527" x2="500.8" y2="531" stroke="#999" stroke-width="0.45"/>
<text x="472" y="501.32" font-size="2.4" fill="#aaa" textLength="26" lengthAdjust="spacingAndGlyphs">Company Name</text>
<rect x="478" y="510.6" width="8" height="0.9" fill="#c8c8c8"/>
<text x="470" y="523.92" font-size="2.4" fill="#aaa" textLength="22" lengthAdjust="spacingAndGlyphs">Drawing Number</text>
<text x="459.3" y="506.08" font-size="2.6" fill="#555" textLength="4" lengthAdjust="spacingAndGlyphs">Title</text>
<text x="459.3" y="521.28" font-size="2.6" fill="#444" textLength="4" lengthAdjust="spacingAndGlyphs">Size</text>
<text x="467.5" y="521.28" font-size="2.6" fill="#444" textLength="6" lengthAdjust="spacingAndGlyphs">DWG NO</text>
<text x="459.5" y="529.98" font-size="2.6" fill="#555" textLength="6" lengthAdjust="spacingAndGlyphs">Scale</text>
<text x="478" y="529.98" font-size="2.6" fill="#555" textLength="6" lengthAdjust="spacingAndGlyphs">Sheet</text>
<text x="338.2" y="511.87" font-size="2.9" fill="#333" textLength="30" lengthAdjust="spacingAndGlyphs">THIS DRAWING AND SPECIFICATIONS</text>
<text x="338.2" y="515.67" font-size="2.9" fill="#333" textLength="26" lengthAdjust="spacingAndGlyphs">ARE PROPERTY OF COMPANY</text>
<text x="338.2" y="519.47" font-size="2.9" fill="#333" textLength="16" lengthAdjust="spacingAndGlyphs">PRODUCT OF</text>
<text x="338.2" y="523.07" font-size="2.9" fill="#333" textLength="30" lengthAdjust="spacingAndGlyphs">ALL DIMENSIONS ARE IN MM</text>
<text x="338.2" y="526.47" font-size="2.9" fill="#333" textLength="28" lengthAdjust="spacingAndGlyphs">UNLESS OTHERWISE STATED</text>
<text x="341.5" y="530.08" font-size="2.6" fill="#555" textLength="25" lengthAdjust="spacingAndGlyphs">DRAWN BY CHECKED BY</text>
<rect x="206" y="58.5" width="39" height="19.5" rx="5" fill="none" stroke="#f57a14" stroke-width="3"/>
<line x1="219" y1="78.5" x2="165.8" y2="216" stroke="#f57a14" stroke-width="3.4"/>
<path d="M160 209.2 L175.4 215.2 L162.5 226.6 Z" fill="#f57a14"/>
</g>
</svg></div>
</body></html>
